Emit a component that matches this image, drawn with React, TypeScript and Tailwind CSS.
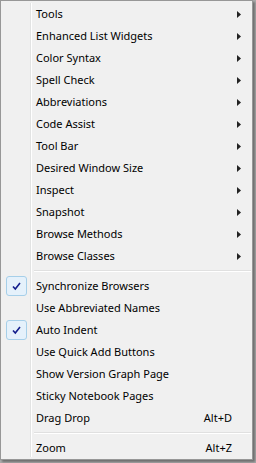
const subItems = [
  "Tools",
  "Enhanced List Widgets",
  "Color Syntax",
  "Spell Check",
  "Abbreviations",
  "Code Assist",
  "Tool Bar",
  "Desired Window Size",
  "Inspect",
  "Snapshot",
  "Browse Methods",
  "Browse Classes",
];

const toggles: { label: string; checked?: boolean; shortcut?: string }[] = [
  { label: "Synchronize Browsers", checked: true },
  { label: "Use Abbreviated Names" },
  { label: "Auto Indent", checked: true },
  { label: "Use Quick Add Buttons" },
  { label: "Show Version Graph Page" },
  { label: "Sticky Notebook Pages" },
  { label: "Drag Drop", shortcut: "Alt+D" },
];

const Check = () => (
  <div className="w-[21px] h-[20px] ml-[4px] rounded-[3px] border border-[#a6cfe9] bg-[#e5f1fb] flex items-center justify-center">
    <svg width="9" height="9" viewBox="0 0 9 9">
      <path d="M1 4.5 L3.3 7 L8 1" fill="none" stroke="#141e8c" strokeWidth="1.6" />
    </svg>
  </div>
);

const Arrow = () => (
  <svg width="4" height="7" viewBox="0 0 4 7" className="mr-[10px]">
    <path d="M0 0 L4 3.5 L0 7 Z" fill="#222" />
  </svg>
);

const Row = ({
  label,
  checked,
  shortcut,
  arrow,
}: {
  label: string;
  checked?: boolean;
  shortcut?: string;
  arrow?: boolean;
}) => (
  <div className="flex items-center h-[22px]">
    <div className="w-[30px] flex items-center shrink-0">{checked && <Check />}</div>
    <span className="ml-[4px] flex-1">{label}</span>
    {shortcut && <span className="mr-[19px]">{shortcut}</span>}
    {arrow && <Arrow />}
  </div>
);

const Separator = () => (
  <div className="h-[8px] flex flex-col justify-center pl-[32px]">
    <div className="h-px bg-[#e0e0e0]" />
    <div className="h-px bg-white" />
  </div>
);

export default function App() {
  return (
    <div className="w-[256px] h-[463px] bg-[#ababab]">
      <div
        className="relative w-[253px] h-[460px] border border-[#979797] bg-[#f0f0f0] text-[11px] text-black py-[2px] px-[1px] shadow-[2px_2px_2px_rgba(0,0,0,0.35)]"
        style={{ fontFamily: '"Noto Sans", "Open Sans", sans-serif' }}
      >
        <div className="absolute left-[29px] top-[2px] bottom-[2px] w-[2px] flex">
          <div className="w-px bg-[#e2e3e3]" />
          <div className="w-px bg-white" />
        </div>
        <div className="relative">
          {subItems.map((s) => (
            <Row key={s} label={s} arrow />
          ))}
          <Separator />
          {toggles.map((t) => (
            <Row key={t.label} {...t} />
          ))}
          <Separator />
          <Row label="Zoom" shortcut="Alt+Z" />
        </div>
      </div>
    </div>
  );
}
